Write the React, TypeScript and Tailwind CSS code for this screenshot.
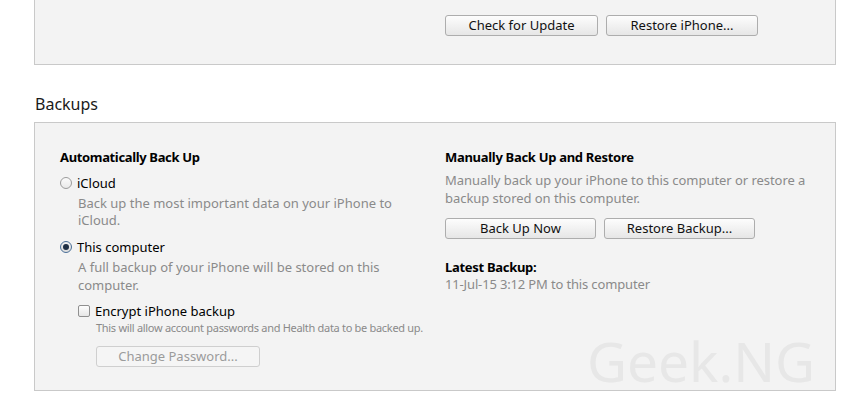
import React from "react";

const font = { fontFamily: '"Noto Sans", "Open Sans", sans-serif' };

function Btn({ children, w, disabled }: { children: React.ReactNode; w: string; disabled?: boolean }) {
  return (
    <div
      className={
        "h-[21px] flex items-center justify-center rounded-[3px] border text-[13px] leading-none " +
        w +
        (disabled
          ? " border-[#cfcfcf] bg-[#f5f5f5] text-[#9b9b9b]"
          : " border-[#adadad] bg-gradient-to-b from-[#fdfdfd] to-[#e6e6e6] text-[#111]")
      }
    >
      {children}
    </div>
  );
}

function Radio({ checked }: { checked?: boolean }) {
  return (
    <div
      className={
        "w-[12px] h-[12px] rounded-full border flex items-center justify-center shrink-0 " +
        (checked ? "border-[#4a6f98] bg-gradient-to-b from-[#f2f2f2] to-[#dcdcdc]" : "border-[#9c9c9c] bg-gradient-to-b from-[#fbfbfb] to-[#e9e9e9]")
      }
    >
      {checked && <div className="w-[6px] h-[6px] rounded-full bg-[#1e2f45]" />}
    </div>
  );
}

export default function App() {
  return (
    <div className="w-[865px] h-[411px] bg-white overflow-hidden relative" style={font}>
      <div className="ml-[34px] w-[802px] h-[65px] border-x border-b border-[#c9c9c9] bg-[#f3f3f3] pl-[410px] pt-[15px] flex gap-[8px]">
        <Btn w="w-[153px]">Check for Update</Btn>
        <Btn w="w-[152px]">Restore iPhone...</Btn>
      </div>
      <div className="h-[57px] pl-[35px] pt-[28px] text-[16px] leading-[22px] text-[#1a1a1a]">Backups</div>
      <div className="ml-[34px] w-[802px] h-[269px] border border-[#c9c9c9] bg-[#f3f3f3] flex pt-[25px]">
        <div className="w-[410px] pl-[25px] flex flex-col text-[13px]">
          <div className="h-[18px] leading-[18px] font-bold tracking-[-0.35px] text-black">Automatically Back Up</div>
          <div className="h-[18px] mt-[8px] flex items-center gap-[5px] leading-[18px] text-black">
            <Radio />
            <span>iCloud</span>
          </div>
          <div className="mt-[3px] pl-[18px] leading-[17px] text-[#8a8a8a]">
            Back up the most important data on your iPhone to
            <br />
            iCloud.
          </div>
          <div className="h-[18px] mt-[9px] flex items-center gap-[5px] leading-[18px] text-black">
            <Radio checked />
            <span>This computer</span>
          </div>
          <div className="mt-[2px] pl-[18px] leading-[18px] text-[#8a8a8a]">
            A full backup of your iPhone will be stored on this
            <br />
            computer.
          </div>
          <div className="h-[18px] mt-[8px] pl-[18px] flex items-center gap-[5px] leading-[18px] text-black">
            <div className="w-[12px] h-[12px] rounded-[2px] border border-[#8f8f8f] bg-gradient-to-b from-[#fdfdfd] to-[#e6e6e6] shrink-0" />
            <span>Encrypt iPhone backup</span>
          </div>
          <div className="mt-[1px] pl-[36px] text-[11px] leading-[14px] tracking-[-0.3px] text-[#8a8a8a]">
            This will allow account passwords and Health data to be backed up.
          </div>
          <div className="mt-[11px] pl-[36px]">
            <Btn w="w-[164px]" disabled>
              Change Password...
            </Btn>
          </div>
        </div>
        <div className="flex-1 flex flex-col text-[13px]">
          <div className="h-[18px] leading-[18px] font-bold tracking-[-0.3px] text-black">Manually Back Up and Restore</div>
          <div className="mt-[5px] leading-[18px] tracking-[-0.05px] text-[#8a8a8a]">
            Manually back up your iPhone to this computer or restore a
            <br />
            backup stored on this computer.
          </div>
          <div className="mt-[11px] flex gap-[8px]">
            <Btn w="w-[151px]">Back Up Now</Btn>
            <Btn w="w-[151px]">Restore Backup...</Btn>
          </div>
          <div className="mt-[20px] h-[17px] leading-[17px] font-bold tracking-[-0.3px] text-black">Latest Backup:</div>
          <div className="h-[17px] leading-[17px] tracking-[-0.15px] text-[#8a8a8a]">11-Jul-15 3:12 PM to this computer</div>
        </div>
      </div>
      <div className="absolute left-[587px] top-[324px] text-[55px] leading-[74px] text-[#e7e7e7] select-none">Geek.NG</div>
    </div>
  );
}
